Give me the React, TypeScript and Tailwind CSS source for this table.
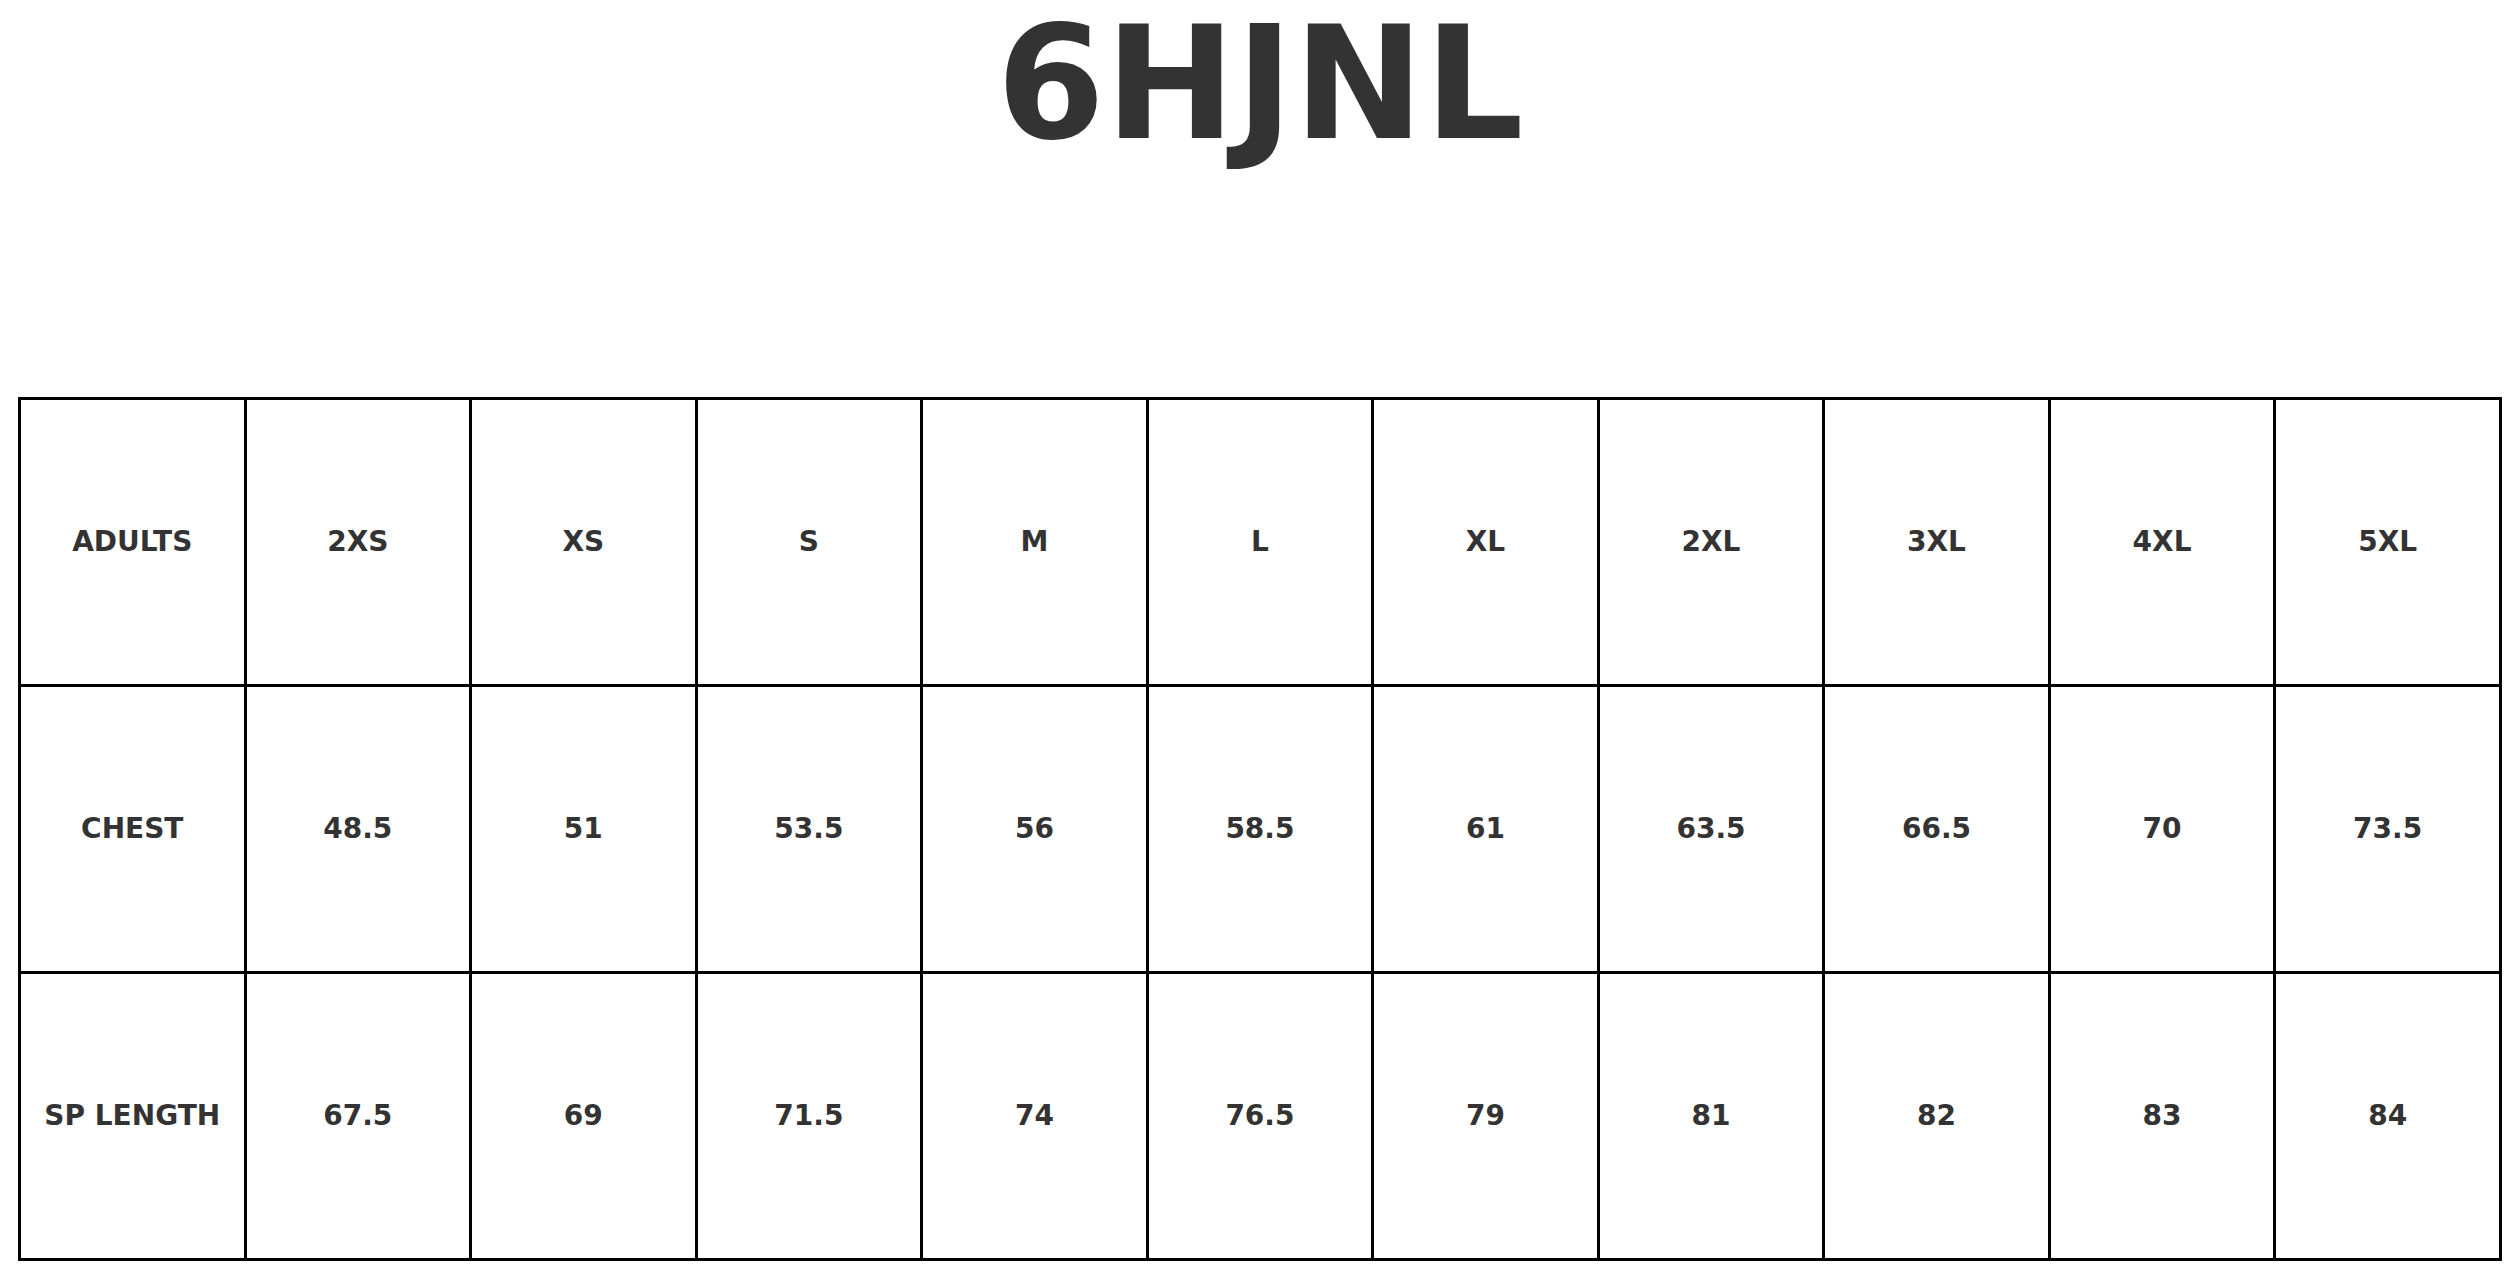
const sizes = ['2XS', 'XS', 'S', 'M', 'L', 'XL', '2XL', '3XL', '4XL', '5XL']

const rows: { label: string; values: string[] }[] = [
  { label: 'CHEST', values: ['48.5', '51', '53.5', '56', '58.5', '61', '63.5', '66.5', '70', '73.5'] },
  { label: 'SP LENGTH', values: ['67.5', '69', '71.5', '74', '76.5', '79', '81', '82', '83', '84'] },
]

const cell = 'h-[287px] border-[3px] border-black text-center align-middle text-[28px] font-bold'

export default function App() {
  return (
    <div className="min-h-[1279px] bg-white font-['DejaVu_Sans',sans-serif] text-[#333333]">
      <h1 className="-mt-[9px] text-center text-[156px] leading-[1.2] font-bold">6HJNL</h1>

      <table className="mx-auto mt-[219px] w-[2484px] table-fixed border-collapse">
        <tbody>
          <tr>
            <td className={cell}>ADULTS</td>
            {sizes.map((size) => (
              <td key={size} className={cell}>
                {size}
              </td>
            ))}
          </tr>
          {rows.map((row) => (
            <tr key={row.label}>
              <td className={cell}>{row.label}</td>
              {row.values.map((value, i) => (
                <td key={i} className={cell}>
                  {value}
                </td>
              ))}
            </tr>
          ))}
        </tbody>
      </table>
    </div>
  )
}
